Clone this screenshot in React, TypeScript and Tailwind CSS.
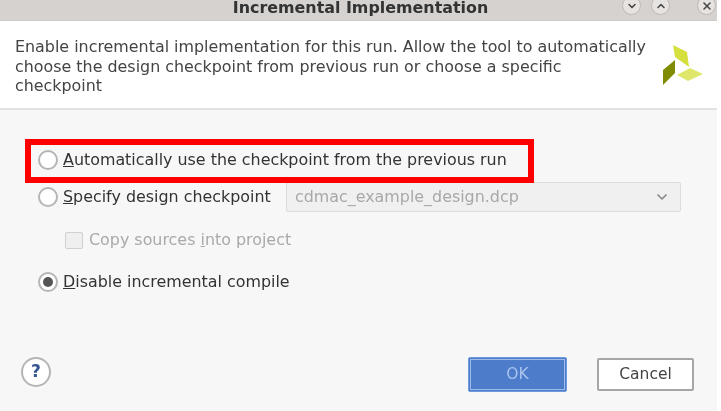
import { ChevronDown, ChevronUp, X } from "lucide-react";

function WinButton({ children }: { children: React.ReactNode }) {
  return (
    <div className="flex h-[19px] w-[19px] items-center justify-center rounded-full border border-[#bdb9b5] bg-[#e6e3e0] text-[#444]">
      {children}
    </div>
  );
}

function Radio({ checked }: { checked?: boolean }) {
  return (
    <div className="flex h-[20px] w-[20px] shrink-0 items-center justify-center rounded-full border-2 border-[#b5b5b5] bg-white">
      {checked && <div className="h-[10px] w-[10px] rounded-full bg-[#555]" />}
    </div>
  );
}

function LogoMark() {
  return (
    <svg width="41" height="41" viewBox="0 0 41 41">
      <polygon points="11,0 25,7 27,22 13,12" fill="#d5df3e" />
      <polygon points="1,25 13,15 13,28 1,40" fill="#7f8c00" />
      <polygon points="15,30 28,23 41,29 26,36" fill="#dfe76a" />
    </svg>
  );
}

export default function App() {
  return (
    <div className="relative h-[411px] w-[721px] overflow-hidden bg-white font-['DejaVu_Sans',sans-serif] blur-[0.6px]">
      <div className="w-[717px]">
        <div className="relative flex h-[21px] items-start justify-center overflow-hidden border-b border-[#cfcbc8] bg-[#d6d2cf]">
          <span className="ml-[4px] mt-[1px] text-[15.9px] leading-[14px] font-bold text-[#333]">Incremental Implementation</span>
          <div className="absolute right-[1px] top-[-4px] flex">
            <WinButton><ChevronDown size={12} strokeWidth={3} /></WinButton>
            <div className="w-[10px]" />
            <WinButton><ChevronUp size={12} strokeWidth={3} /></WinButton>
            <div className="w-[27px]" />
            <WinButton><X size={12} strokeWidth={3} /></WinButton>
          </div>
        </div>

        <div className="flex h-[89px] items-start justify-between border-b-2 border-[#e2e2e2] bg-white pl-[15px] pr-[14px] pt-[16px]">
          <p className="w-[635px] text-[15.9px] leading-[19.5px] text-[#444]">
            Enable incremental implementation for this run. Allow the tool to automatically choose the design checkpoint from previous run or choose a specific checkpoint
          </p>
          <div className="mt-[8px]"><LogoMark /></div>
        </div>

        <div className="h-[301px] bg-[#f7f7f7] pl-[38px] pr-[36px] pt-[40px] text-[15.9px] text-[#333]">
          <div className="flex h-[20px] items-center gap-[5px]">
            <Radio />
            <span><span className="underline">A</span>utomatically use the checkpoint from the previous run</span>
          </div>
          <div className="mt-[12px] flex h-[30px] items-center">
            <Radio />
            <span className="ml-[5px] w-[223px] shrink-0"><span className="underline">S</span>pecify design checkpoint</span>
            <div className="flex h-[30px] flex-1 items-center justify-between rounded-[2px] border border-[#dcdcdc] bg-[#f0f0f0] pl-[8px] pr-[10px] text-[#a8a8a8]">
              <span>cdmac_example_design.dcp</span>
              <ChevronDown size={16} strokeWidth={2.5} className="text-[#888]" />
            </div>
          </div>
          <div className="ml-[27px] mt-[18px] flex h-[20px] items-center gap-[6px] text-[#a9a9a9]">
            <div className="h-[17px] w-[18px] rounded-[2px] border border-[#d0d0d0] bg-[#efefef]" />
            <span>Copy sources <span className="underline">i</span>nto project</span>
          </div>
          <div className="mt-[22px] flex h-[20px] items-center gap-[5px]">
            <Radio checked />
            <span><span className="underline">D</span>isable incremental compile</span>
          </div>

          <div className="mt-[65px] flex items-start justify-between">
            <div className="-ml-[17px] flex h-[30px] w-[30px] items-center justify-center rounded-full border-[2.5px] border-[#b5b5b5] bg-white text-[17px] font-bold text-[#34568f]">?</div>
            <div className="mr-[-13px] flex gap-[30px]">
              <div className="flex h-[35px] w-[99px] items-center justify-center rounded-[2px] border border-[#6f9ae0] bg-[#4d7ccb] text-[15.5px] text-[#a9c4ee] outline-1 -outline-offset-3 outline-[#9dbcec]">OK</div>
              <div className="mt-[1px] flex h-[33px] w-[97px] items-center justify-center rounded-[2px] border-2 border-[#a6a6a6] bg-white text-[15.5px] text-[#444]">Cancel</div>
            </div>
          </div>
        </div>
      </div>

      {/* red annotation drawn over the dialog */}
      <div className="absolute left-[25px] top-[139px] h-[44px] w-[509px] border-[6px] border-[#ff0000]" />
    </div>
  );
}
